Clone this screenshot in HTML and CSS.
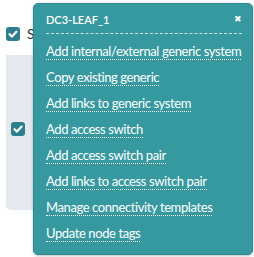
FILE: index.html
```html
<!DOCTYPE html>
<html>
<head>
<meta charset="utf-8">
<link rel="stylesheet" href="styles.css">
</head>
<body>
<div class="page">
  <label class="check top"><span class="box"><svg viewBox="0 0 14 14" width="14" height="14"><path d="M3.5 7.2 L6 9.6 L10.6 4.6" fill="none" stroke="#fff" stroke-width="2.2" stroke-linecap="round" stroke-linejoin="round"/></svg></span><span class="lbl">System</span></label>
  <div class="panel">
    <label class="check inner"><span class="box"><svg viewBox="0 0 14 14" width="14" height="14"><path d="M3.5 7.2 L6 9.6 L10.6 4.6" fill="none" stroke="#fff" stroke-width="2.2" stroke-linecap="round" stroke-linejoin="round"/></svg></span><span class="lbl">Details</span></label>
  </div>
  <div class="popup">
    <div class="head">
      <span class="title">DC3-LEAF_1</span>
      <span class="close">✖</span>
    </div>
    <ul class="menu">
      <li><a>Add internal/external generic system</a></li>
      <li><a>Copy existing generic</a></li>
      <li><a>Add links to generic system</a></li>
      <li><a>Add access switch</a></li>
      <li><a>Add access switch pair</a></li>
      <li><a>Add links to access switch pair</a></li>
      <li><a>Manage connectivity templates</a></li>
      <li><a>Update node tags</a></li>
    </ul>
  </div>
</div>
</body>
</html>
```

FILE: styles.css
```css
html, body {
  margin: 0;
  padding: 0;
  background: #fff;
}
.page {
  position: relative;
  width: 254px;
  height: 257px;
  overflow: hidden;
  font-family: Lato, "Open Sans", sans-serif;
  color: #333;
}
.check {
  display: flex;
  align-items: center;
  gap: 7px;
  font-size: 14px;
}
.check.top {
  padding: 25px 0 0 6px;
}
.box {
  width: 14px;
  height: 14px;
  border-radius: 3px;
  background: #2b7f8e;
  display: flex;
}
.panel {
  margin: 13px 0 0 6px;
  width: 60px;
  height: 155px;
  background: #e5e8ee;
  border-radius: 0 0 0 5px;
  box-sizing: border-box;
  padding: 65px 0 0 5px;
}
.popup {
  position: absolute;
  left: 33px;
  top: 3px;
  width: 220px;
  height: 252px;
  box-sizing: border-box;
  background: #3699a0;
  border: 1px solid #2e8a91;
  border-radius: 5px;
  padding: 0 10px 0 12px;
  color: #fff;
  box-shadow: 0 1px 3px rgba(0,0,0,0.25);
}
.head {
  display: flex;
  justify-content: space-between;
  align-items: flex-start;
  border-bottom: 1px dashed rgba(255,255,255,0.75);
  padding: 10px 0 7px;
}
.title {
  font-size: 11px;
  font-weight: 600;
  line-height: 12px;
}
.close {
  font-size: 9px;
  line-height: 9px;
}
.menu {
  list-style: none;
  margin: 0;
  padding: 0;
}
.menu li {
  height: 26px;
  display: flex;
  align-items: flex-end;
}
.menu a {
  font-size: 13px;
  line-height: 15px;
  color: #fff;
  white-space: nowrap;
  border-bottom: 1px dotted #fff;
  letter-spacing: -0.4px;
}
```
